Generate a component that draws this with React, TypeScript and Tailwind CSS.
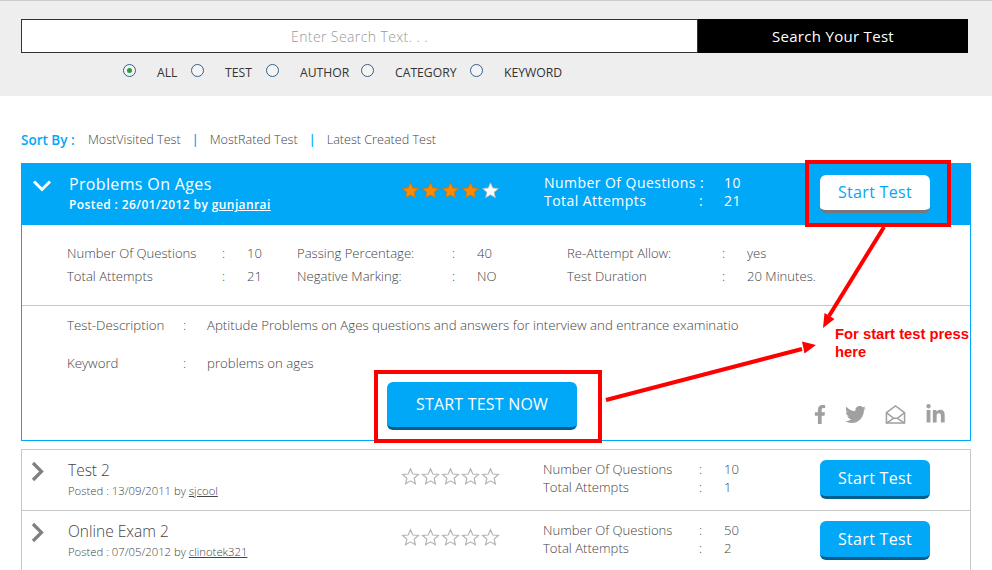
import React from "react";
import { FaFacebookF, FaTwitter, FaLinkedinIn } from "react-icons/fa";

const STAR = "M12 2.2l2.9 6.6 7.1.7-5.4 4.7 1.6 7-6.2-3.7-6.2 3.7 1.6-7L2 9.5l7.1-.7z";

function Stars({ filled, onBlue }: { filled: number; onBlue?: boolean }) {
  return (
    <div className="flex gap-[1px]">
      {[0, 1, 2, 3, 4].map((i) => {
        const on = i < filled;
        return (
          <svg key={i} viewBox="0 0 24 24" className="w-[19px] h-[19px]">
            <path
              d={STAR}
              fill={on ? "#ff8a00" : "#ffffff"}
              stroke={on ? "#d97400" : "#b5b5b5"}
              strokeWidth={onBlue ? 1 : 1.5}
            />
          </svg>
        );
      })}
    </div>
  );
}

function Chevron({ down }: { down?: boolean }) {
  return down ? (
    <svg viewBox="0 0 20 14" className="w-[20px] h-[14px]">
      <path d="M2 2.5l8 8 8-8" fill="none" stroke="#ffffff" strokeWidth="3" />
    </svg>
  ) : (
    <svg viewBox="0 0 14 21" className="w-[14px] h-[21px]">
      <path d="M2 2l8.500 8.500-8.500 8.500" fill="none" stroke="#808080" strokeWidth="3.2" />
    </svg>
  );
}

function Stats({ q, a }: { q: string; a: string }) {
  return (
    <div className="grid grid-cols-[156px_25px_auto] text-[13.1px] leading-[18px] font-light text-[#444]">
      <span>Number Of Questions</span>
      <span>:</span>
      <span>{q}</span>
      <span>Total Attempts</span>
      <span>:</span>
      <span>{a}</span>
    </div>
  );
}

function Row({ title, date, by, q, a }: { title: string; date: string; by: string; q: string; a: string }) {
  return (
    <div className="grid grid-cols-[46px_333px_142px_277px_110px] h-[61px] border-b border-[#c8c8c8] last:border-b-0">
      <div className="pt-[11px] pl-[9px]">
        <Chevron />
      </div>
      <div className="pt-[9px]">
        <div className="text-[15.5px] leading-[22px] font-light text-[#444]">{title}</div>
        <div className="text-[11.3px] leading-[16px] mt-[2px] font-light text-[#444]">
          Posted : {date} by <span className="underline">{by}</span>
        </div>
      </div>
      <div className="pt-[17px]">
        <Stars filled={0} />
      </div>
      <div className="pt-[10px]">
        <Stats q={q} a={a} />
      </div>
      <div className="pt-[10px]">
        <button className="w-[110px] h-[39px] pb-[1px] rounded-[6px] bg-[#00a8f7] border-b-[3px] border-[#005f8f] text-white text-[16px] tracking-[0.3px]">
          Start Test
        </button>
      </div>
    </div>
  );
}

function Detail({ label, value }: { label: string; value: string }) {
  return (
    <div className="flex">
      <span className="w-[155px]">{label}</span>
      <span className="w-[25px]">:</span>
      <span>{value}</span>
    </div>
  );
}

function Radio({ label, checked, w }: { label: string; checked?: boolean; w: string }) {
  return (
    <div className={`flex items-center ${w}`}>
      <span className="w-[13px] h-[13px] rounded-full border border-[#34608c] bg-[#f4f4f4] flex items-center justify-center mr-[21px] -mt-[5px]">
        {checked && <span className="w-[5px] h-[5px] rounded-full bg-[#2c9b3c]" />}
      </span>
      <span className="text-[12.2px] text-[#333] leading-[16px]">{label}</span>
    </div>
  );
}

export default function App() {
  return (
    <div className="relative w-[992px] h-[570px] overflow-hidden bg-white text-[#444] font-['Open_Sans',sans-serif]">
      <div className="h-[96px] border-t border-[#cccccc] bg-[#eeeeee] pt-[18px] px-[21px]">
        <div className="flex w-[947px] h-[34px]">
          <div className="w-[677px] border border-[#333] bg-white flex items-center justify-center text-[14px] font-light text-[#999]">
            <span className="tracking-[0.4px]">Enter Search Text. . .</span>
          </div>
          <button className="flex-1 bg-black text-white text-[15px] tracking-[0.3px]">Search Your Test</button>
        </div>
        <div className="flex pl-[102px] mt-[12px]">
          <Radio label="ALL" checked w="w-[68px]" />
          <Radio label="TEST" w="w-[75px]" />
          <Radio label="AUTHOR" w="w-[95px]" />
          <Radio label="CATEGORY" w="w-[109px]" />
          <Radio label="KEYWORD" w="w-[120px]" />
        </div>
      </div>

      <div className="px-[21px]">
        <div className="flex items-center h-[18px] mt-[35px] text-[12.6px] font-light">
          <span className="w-[67px] text-[13.5px] text-[#00a8f7] font-semibold whitespace-nowrap">Sort By :</span>
          <span>MostVisited Test</span>
          <span className="w-[29px] text-center font-semibold text-[#00a8f7]">|</span>
          <span>MostRated Test</span>
          <span className="w-[29px] text-center font-semibold text-[#00a8f7]">|</span>
          <span>Latest Created Test</span>
        </div>

        <div className="w-[950px] h-[278px] mt-[14px] border border-[#00a8f7]">
          <div className="grid grid-cols-[47px_332px_143px_276px_110px] h-[61px] bg-[#00a8f7] text-white">
            <div className="pt-[15px] pl-[10px]">
              <Chevron down />
            </div>
            <div className="pt-[9px]">
              <div className="text-[16px] leading-[22px] tracking-[0.35px]">Problems On Ages</div>
              <div className="text-[12px] leading-[16px] mt-[2px] font-semibold tracking-[0.4px]">
                Posted : 26/01/2012 by <span className="underline">gunjanrai</span>
              </div>
            </div>
            <div className="pt-[17px]">
              <Stars filled={4} onBlue />
            </div>
            <div className="pt-[10px]">
              <div className="grid grid-cols-[155px_25px_auto] text-[14px] leading-[18px] font-medium tracking-[0.45px]">
                <span className="whitespace-nowrap">Number Of Questions :</span>
                <span />
                <span>10</span>
                <span>Total Attempts</span>
                <span>:</span>
                <span>21</span>
              </div>
            </div>
            <div className="pt-[11px]">
              <button className="w-[110px] h-[38px] pb-[2px] rounded-[6px] bg-white border-b-[3px] border-[#777] text-[#00a8f7] text-[16px] tracking-[0.3px]">
                Start Test
              </button>
            </div>
          </div>

          <div className="h-[81px] border-b border-[#c8c8c8] pl-[45px] pt-[17px] flex text-[13.1px] font-light leading-[23px]">
            <div className="w-[230px]">
              <Detail label="Number Of Questions" value="10" />
              <Detail label="Total Attempts" value="21" />
            </div>
            <div className="w-[270px]">
              <Detail label="Passing Percentage:" value="40" />
              <Detail label="Negative Marking:" value="NO" />
            </div>
            <div>
              <Detail label="Re-Attempt Allow:" value="yes" />
              <Detail label="Test Duration" value="20 Minutes." />
            </div>
          </div>

          <div className="relative pl-[45px] pt-[10px] text-[13.25px] font-light">
            <div className="flex h-[18px] leading-[18px]">
              <span className="w-[116px]">Test-Description</span>
              <span className="w-[24px]">:</span>
              <span className="whitespace-nowrap">
                Aptitude Problems on Ages questions and answers for interview and entrance examinatio
              </span>
            </div>
            <div className="flex h-[18px] leading-[18px] mt-[20px]">
              <span className="w-[116px]">Keyword</span>
              <span className="w-[24px]">:</span>
              <span>problems on ages</span>
            </div>
            <button className="block ml-[320px] mt-[10px] w-[190px] h-[48px] pb-[1px] rounded-[6px] bg-[#00a8f7] border-b-[3px] border-[#005f8f] text-white text-[16px] font-normal tracking-[0.2px]">
              START TEST NOW
            </button>
            <div className="absolute left-[792px] top-[98px] flex items-center gap-[19px] text-[#a0a0a0] text-[21px]">
              <FaFacebookF className="w-[12px]" />
              <FaTwitter />
              <svg viewBox="0 0 22 22" className="w-[21px] h-[21px]" fill="none" stroke="#a0a0a0" strokeWidth="1.6">
                <path d="M1.500 9L11 2l9.500 7v11h-19z" />
                <path d="M1.500 9l7.500 6h4l7.500-6" />
                <path d="M1.500 20l7.500-5M20.500 20l-7.500-5" />
              </svg>
              <FaLinkedinIn />
            </div>
          </div>
        </div>

        <div className="w-[950px] mt-[8px] border border-[#c8c8c8] border-b-0">
          <Row title="Test 2" date="13/09/2011" by="sjcool" q="10" a="1" />
          <Row title="Online Exam 2" date="07/05/2012" by="clinotek321" q="50" a="2" />
        </div>
      </div>

      {/* annotations over the page */}
      <div className="absolute left-[805px] top-[160px] w-[146px] h-[67px] border-[4px] border-[#ff0000]" />
      <div className="absolute left-[374px] top-[370px] w-[228px] h-[73px] border-[4px] border-[#ff0000]" />
      <svg className="absolute left-0 top-0 w-[992px] h-[570px] pointer-events-none" viewBox="0 0 992 570">
        <path d="M884 227L829 316" stroke="#ff0000" strokeWidth="4" fill="none" />
        <path d="M823 328l1.500-15 10 6z" fill="#ff0000" />
        <path d="M606 400L802 349" stroke="#ff0000" strokeWidth="4" fill="none" />
        <path d="M816 345l-14-3.500 2.500 12z" fill="#ff0000" />
      </svg>
      <div className="absolute left-[835px] top-[325px] text-[14.8px] leading-[18px] font-bold text-[#ff0000] font-['Liberation_Sans',sans-serif] whitespace-nowrap">
        For start test press
        <br />
        here
      </div>
    </div>
  );
}
